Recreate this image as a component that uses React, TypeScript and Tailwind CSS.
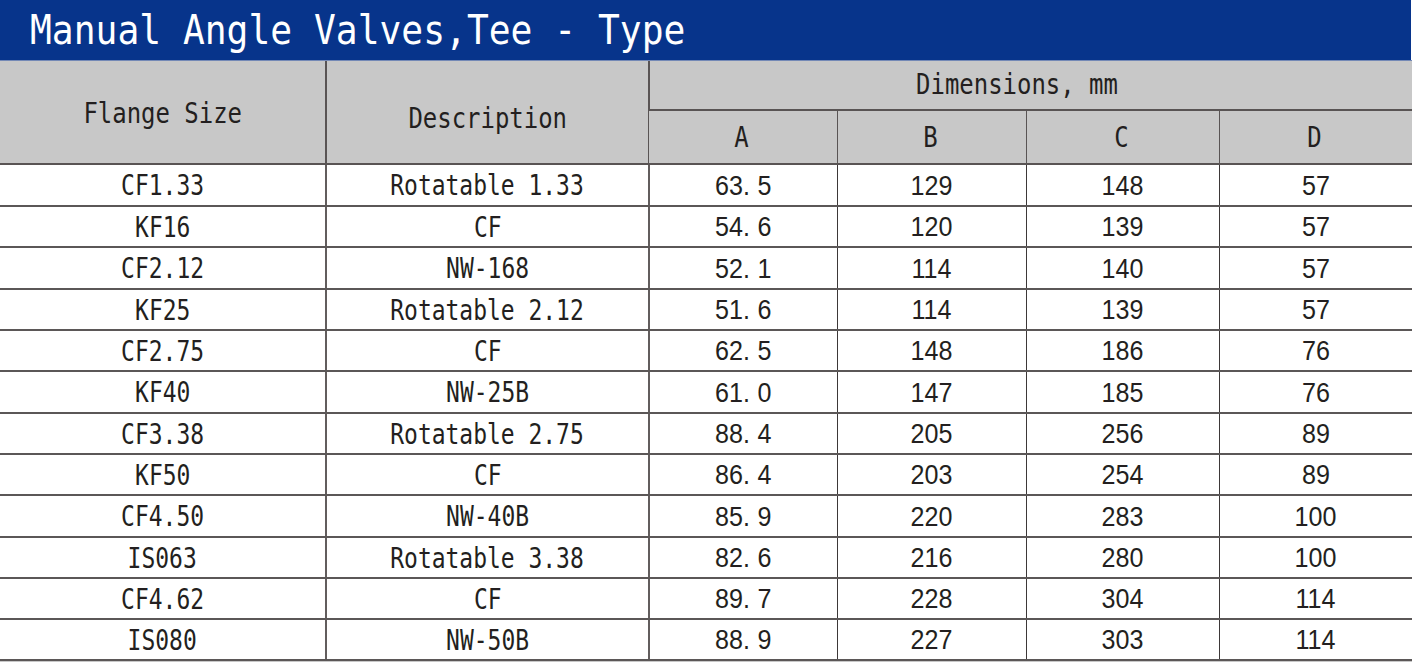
import React from 'react';

const rows = [
  ['CF1.33', 'Rotatable 1.33', '63.5', '129', '148', '57'],
  ['KF16', 'CF', '54.6', '120', '139', '57'],
  ['CF2.12', 'NW-168', '52.1', '114', '140', '57'],
  ['KF25', 'Rotatable 2.12', '51.6', '114', '139', '57'],
  ['CF2.75', 'CF', '62.5', '148', '186', '76'],
  ['KF40', 'NW-25B', '61.0', '147', '185', '76'],
  ['CF3.38', 'Rotatable 2.75', '88.4', '205', '256', '89'],
  ['KF50', 'CF', '86.4', '203', '254', '89'],
  ['CF4.50', 'NW-40B', '85.9', '220', '283', '100'],
  ['IS063', 'Rotatable 3.38', '82.6', '216', '280', '100'],
  ['CF4.62', 'CF', '89.7', '228', '304', '114'],
  ['IS080', 'NW-50B', '88.9', '227', '303', '114'],
];

// the printed rows alternate between 42 and 41 px
const tall = [true, false, true, false, false, true, false, false, true, false, false, false];

const mono = "font-['DejaVu_Sans_Mono',monospace]";
const sans = "font-['Liberation_Sans',Arial,sans-serif]";

function Narrow({ children, className = 'scale-x-[0.82]' }: { children: React.ReactNode; className?: string }) {
  return <span className={`inline-block whitespace-pre ${className}`}>{children}</span>;
}

function Decimal({ value }: { value: string }) {
  const [whole, frac] = value.split('.');
  return (
    <Narrow className="scale-x-[0.93]">
      {whole}
      <span className="mr-[8px]">.</span>
      {frac}
    </Narrow>
  );
}

export default function App() {
  return (
    <div className="w-[1412px] bg-white text-[#231f20]">
      {/* Title bar */}
      <div className="h-[60px] w-[1411px] bg-[#07348b] flex items-center pl-[30px]">
        <h1 className={`${mono} text-[41px] leading-none text-white`}>
          <Narrow className="scale-x-[0.885] origin-left">Manual Angle Valves,Tee - Type</Narrow>
        </h1>
      </div>
      <div className="h-px bg-[#7489b6]" />

      {/* Header */}
      <div
        className={`grid grid-cols-[325px_323px_189px_189px_193px_193px] grid-rows-[50px_54px] bg-[#c8c8c8] ${mono} text-[28px] leading-none`}
      >
        <div className="row-span-2 flex items-center justify-center pt-[4px] border-b-2 border-[#595454]">
          <Narrow className="scale-x-[0.855]">Flange Size</Narrow>
        </div>
        <div className="row-span-2 flex items-center justify-center pt-[14px] border-l-2 border-b-2 border-[#595454]">
          <Narrow className="scale-x-[0.855]">Description</Narrow>
        </div>
        <div className="col-span-4 flex items-center justify-center pr-[28px] border-l-2 border-b-2 border-[#595454]">
          <Narrow className="scale-x-[0.855]">Dimensions, mm</Narrow>
        </div>
        {['A', 'B', 'C', 'D'].map((l) => (
          <div key={l} className="flex items-center justify-center pt-[2px] pr-[4px] border-l border-b-2 border-[#595454]">
            <Narrow className="scale-x-[0.855]">{l}</Narrow>
          </div>
        ))}
      </div>

      {/* Body */}
      {rows.map((r, i) => (
        <div
          key={i}
          className={`grid grid-cols-[325px_323px_189px_189px_193px_193px] border-b-2 border-[#5b5757] ${tall[i] ? 'h-[42px]' : 'h-[41px]'}`}
        >
          <div className={`${mono} text-[28px] leading-none flex items-center justify-center pt-[2px]`}>
            <Narrow>{r[0]}</Narrow>
          </div>
          <div className={`${mono} text-[28px] leading-none flex items-center justify-center pt-[2px] border-l-2 border-[#625d5d]`}>
            <Narrow>{r[1]}</Narrow>
          </div>
          <div className={`${sans} text-[27px] leading-none flex items-center justify-center pt-[2px] border-l-2 border-[#625d5d]`}>
            <Decimal value={r[2]} />
          </div>
          {r.slice(3).map((v, j) => (
            <div key={j} className={`${sans} text-[27px] leading-none flex items-center justify-center pt-[2px] border-l border-[#3d3838]`}>
              <Narrow className="scale-x-[0.93]">{v}</Narrow>
            </div>
          ))}
        </div>
      ))}
      <div className="h-px bg-[#c8c8c8]" />
    </div>
  );
}
